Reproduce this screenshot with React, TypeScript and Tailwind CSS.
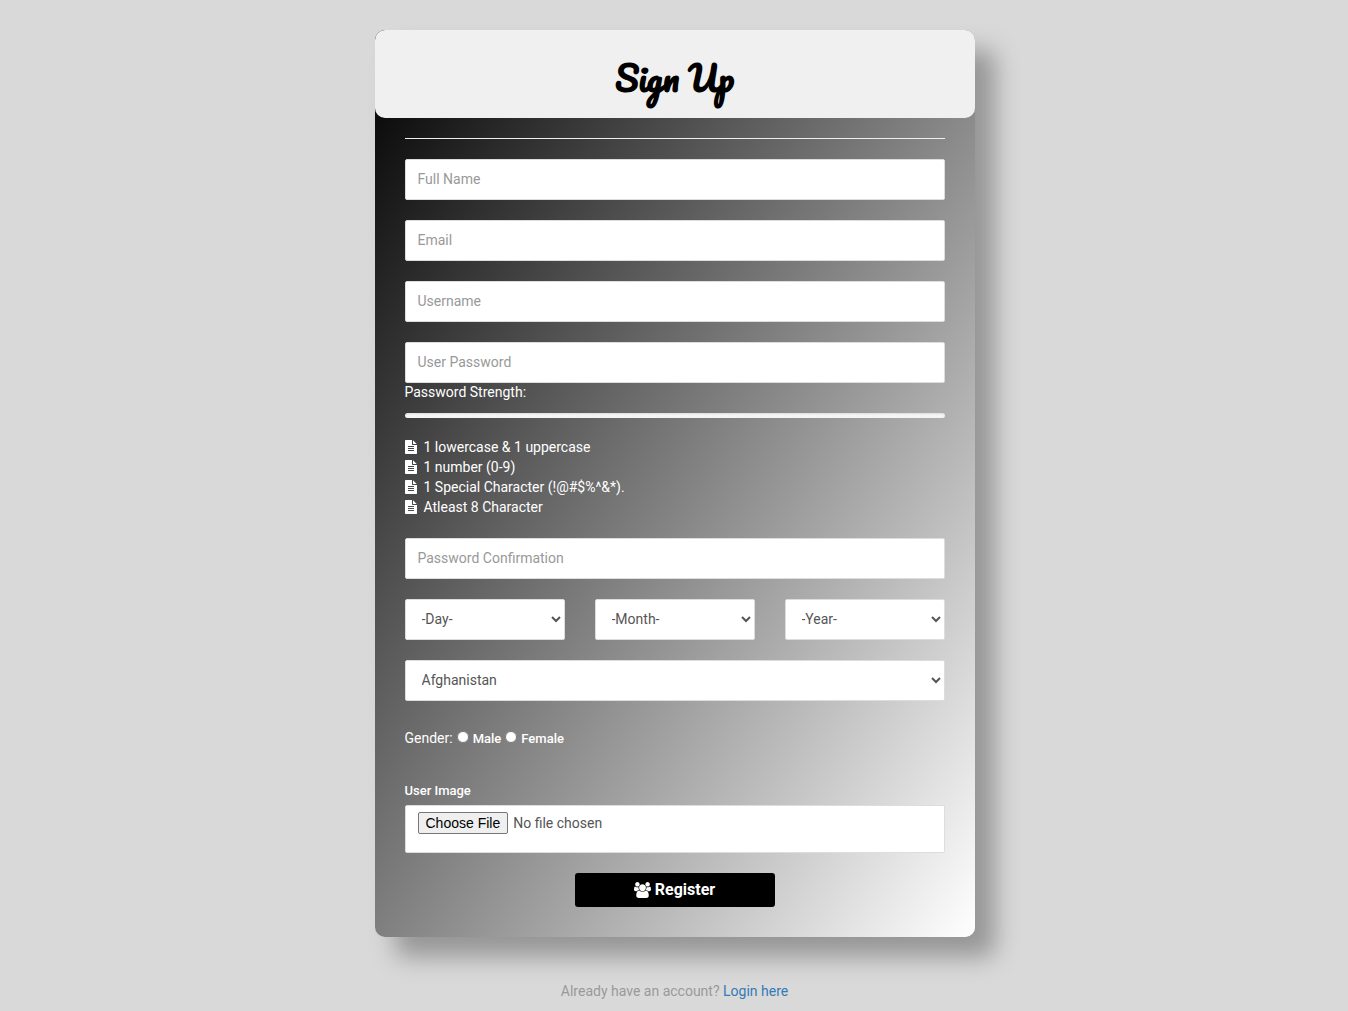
import type { InputHTMLAttributes, ReactNode, SelectHTMLAttributes } from "react";

const fieldClass =
  "block w-full rounded-xs border border-[#ddd] bg-white px-3 text-sm text-[#555] placeholder:text-[#999] focus:outline-none";

function TextField({ label, ...props }: { label: string } & InputHTMLAttributes<HTMLInputElement>) {
  return <input aria-label={label} placeholder={label} className={`${fieldClass} h-[41px] pb-0.5`} {...props} />;
}

function SelectField({ label, children, ...props }: { label: string; children: ReactNode } & SelectHTMLAttributes<HTMLSelectElement>) {
  return (
    <select aria-label={label} className={`${fieldClass} h-[41px] pb-0.5`} {...props}>
      {children}
    </select>
  );
}

function FileTextIcon() {
  return (
    <svg viewBox="128 0 1536 1792" className="h-3.5 w-3 shrink-0 fill-white" aria-hidden="true">
      <path d="M1596 476q14 14 28 36h-472v-472q22 14 36 28zm-476 164h544v1056q0 40-28 68t-68 28h-1344q-40 0-68-28t-28-68v-1600q0-40 28-68t68-28h800v544q0 40 28 68t68 28zm160 736v-64q0-14-9-23t-23-9h-704q-14 0-23 9t-9 23v64q0 14 9 23t23 9h704q14 0 23-9t9-23zm0-256v-64q0-14-9-23t-23-9h-704q-14 0-23 9t-9 23v64q0 14 9 23t23 9h704q14 0 23-9t9-23zm0-256v-64q0-14-9-23t-23-9h-704q-14 0-23 9t-9 23v64q0 14 9 23t23 9h704q14 0 23-9t9-23z" />
    </svg>
  );
}

function UsersIcon() {
  return (
    <svg viewBox="0 0 1920 1792" className="h-4 w-[17px] fill-white" aria-hidden="true">
      <path d="M593 896q-162 5-265 128h-134q-82 0-138-40.5t-56-118.5q0-353 124-353 6 0 43.5 21t97.5 42.5 119 21.5q67 0 133-23-5 37-5 66 0 139 81 256zm1071 637q0 120-73 189.5t-194 69.5h-874q-121 0-194-69.5t-73-189.5q0-53 3.5-103.5t14-109 26.5-108.5 43-97.5 62-81 85.5-53.5 111.5-20q10 0 43 21.5t73 48 107 48 135 21.5 135-21.5 107-48 73-48 43-21.5q61 0 111.5 20t85.5 53.5 62 81 43 97.5 26.5 108.5 14 109 3.5 103.5zm-1024-1277q0 106-75 181t-181 75-181-75-75-181 75-181 181-75 181 75 75 181zm704 384q0 159-112.5 271.5t-271.5 112.5-271.5-112.5-112.5-271.5 112.5-271.5 271.5-112.5 271.5 112.5 112.5 271.5zm576 225q0 78-56 118.5t-138 40.5h-134q-103-123-265-128 81-117 81-256 0-29-5-66 66 23 133 23 59 0 119-21.5t97.5-42.5 43.5-21q124 0 124 353zm-128-609q0 106-75 181t-181 75-181-75-75-181 75-181 181-75 181 75 75 181z" />
    </svg>
  );
}

const rules = ["1 lowercase & 1 uppercase", "1 number (0-9)", "1 Special Character (!@#$%^&*).", "Atleast 8 Character"];
const days = Array.from({ length: 31 }, (_, i) => i + 1);
const months = ["January", "February", "March", "April", "May", "June", "July", "August", "September", "October", "November", "December"];
const years = Array.from({ length: 60 }, (_, i) => 2020 - i);

export default function App() {
  return (
    <main className="min-h-screen bg-[#d9d9d9] pt-[30px] pl-px font-['Roboto',sans-serif] text-sm text-[#999]">
      <form
        onSubmit={(e) => e.preventDefault()}
        className="mx-auto max-w-[600px] rounded-[10px] bg-linear-to-br/srgb from-black to-white pb-[30px] text-white shadow-[20px_20px_24px_#969696]"
      >
        <h1 className="flex h-[88px] items-center justify-center rounded-[10px] bg-[#f0f0f0] pt-2 font-['Pacifico',cursive] text-[34px] font-bold text-black">
          Sign Up
        </h1>

        <div className="px-[30px]">
          <hr className="my-5 border-[#eee]" />

          <div className="flex flex-col gap-5">
            <TextField label="Full Name" />
            <TextField label="Email" type="email" />
            <TextField label="Username" />
            <TextField label="User Password" type="password" />
          </div>

          <p className="leading-[18px]">Password Strength:</p>
          <div role="progressbar" aria-label="Password Strength" aria-valuenow={0} className="mt-3 h-[5px] rounded-sm bg-[#f5f5f5] shadow-[inset_0_1px_2px_rgba(0,0,0,0.1)]" />

          <ul className="mt-[19px] mb-[21px] leading-5">
            {rules.map((rule) => (
              <li key={rule} className="flex items-center gap-[7px]">
                <FileTextIcon />
                {rule}
              </li>
            ))}
          </ul>

          <div className="flex flex-col gap-5">
            <TextField label="Password Confirmation" type="password" />
            <div className="grid grid-cols-3 gap-[30px]">
              <SelectField label="Day">
                <option>-Day-</option>
                {days.map((d) => <option key={d}>{d}</option>)}
              </SelectField>
              <SelectField label="Month">
                <option>-Month-</option>
                {months.map((m) => <option key={m}>{m}</option>)}
              </SelectField>
              <SelectField label="Year">
                <option>-Year-</option>
                {years.map((y) => <option key={y}>{y}</option>)}
              </SelectField>
            </div>
            <SelectField label="Country">
              <option>Afghanistan</option>
              <option>Albania</option>
              <option>Algeria</option>
            </SelectField>
          </div>

          <fieldset className="mt-7 flex h-5 items-center gap-1">
            <legend className="float-left pb-0.5 leading-[18px]">Gender:</legend>
            <input id="male" type="radio" name="gender" className="mb-1 size-3" />
            <label htmlFor="male" className="text-[13px] font-medium">Male</label>
            <input id="female" type="radio" name="gender" className="mb-1 size-3" />
            <label htmlFor="female" className="text-[13px] font-medium">Female</label>
          </fieldset>

          <label htmlFor="image" className="mt-8 mb-1 block text-[13px] leading-5 font-medium">User Image</label>
          <input
            id="image"
            type="file"
            className={`${fieldClass} h-12 pt-1.5 file:mr-[5px] file:rounded-xs file:border file:border-solid file:border-[#767676] file:bg-[#efefef] file:px-[7px] file:font-['Liberation_Sans',Arial,sans-serif] file:text-sm file:text-black`}
          />

          <button type="submit" className="mx-auto mt-5 flex h-[34px] w-[200px] items-center justify-center gap-1 rounded-[3px] bg-black text-base font-bold text-white">
            <UsersIcon />
            Register
          </button>
        </div>
      </form>

      <p className="mt-11 text-center leading-5">
        Already have an account? <a href="#login" className="text-[#337ab7]">Login here</a>
      </p>
    </main>
  );
}
